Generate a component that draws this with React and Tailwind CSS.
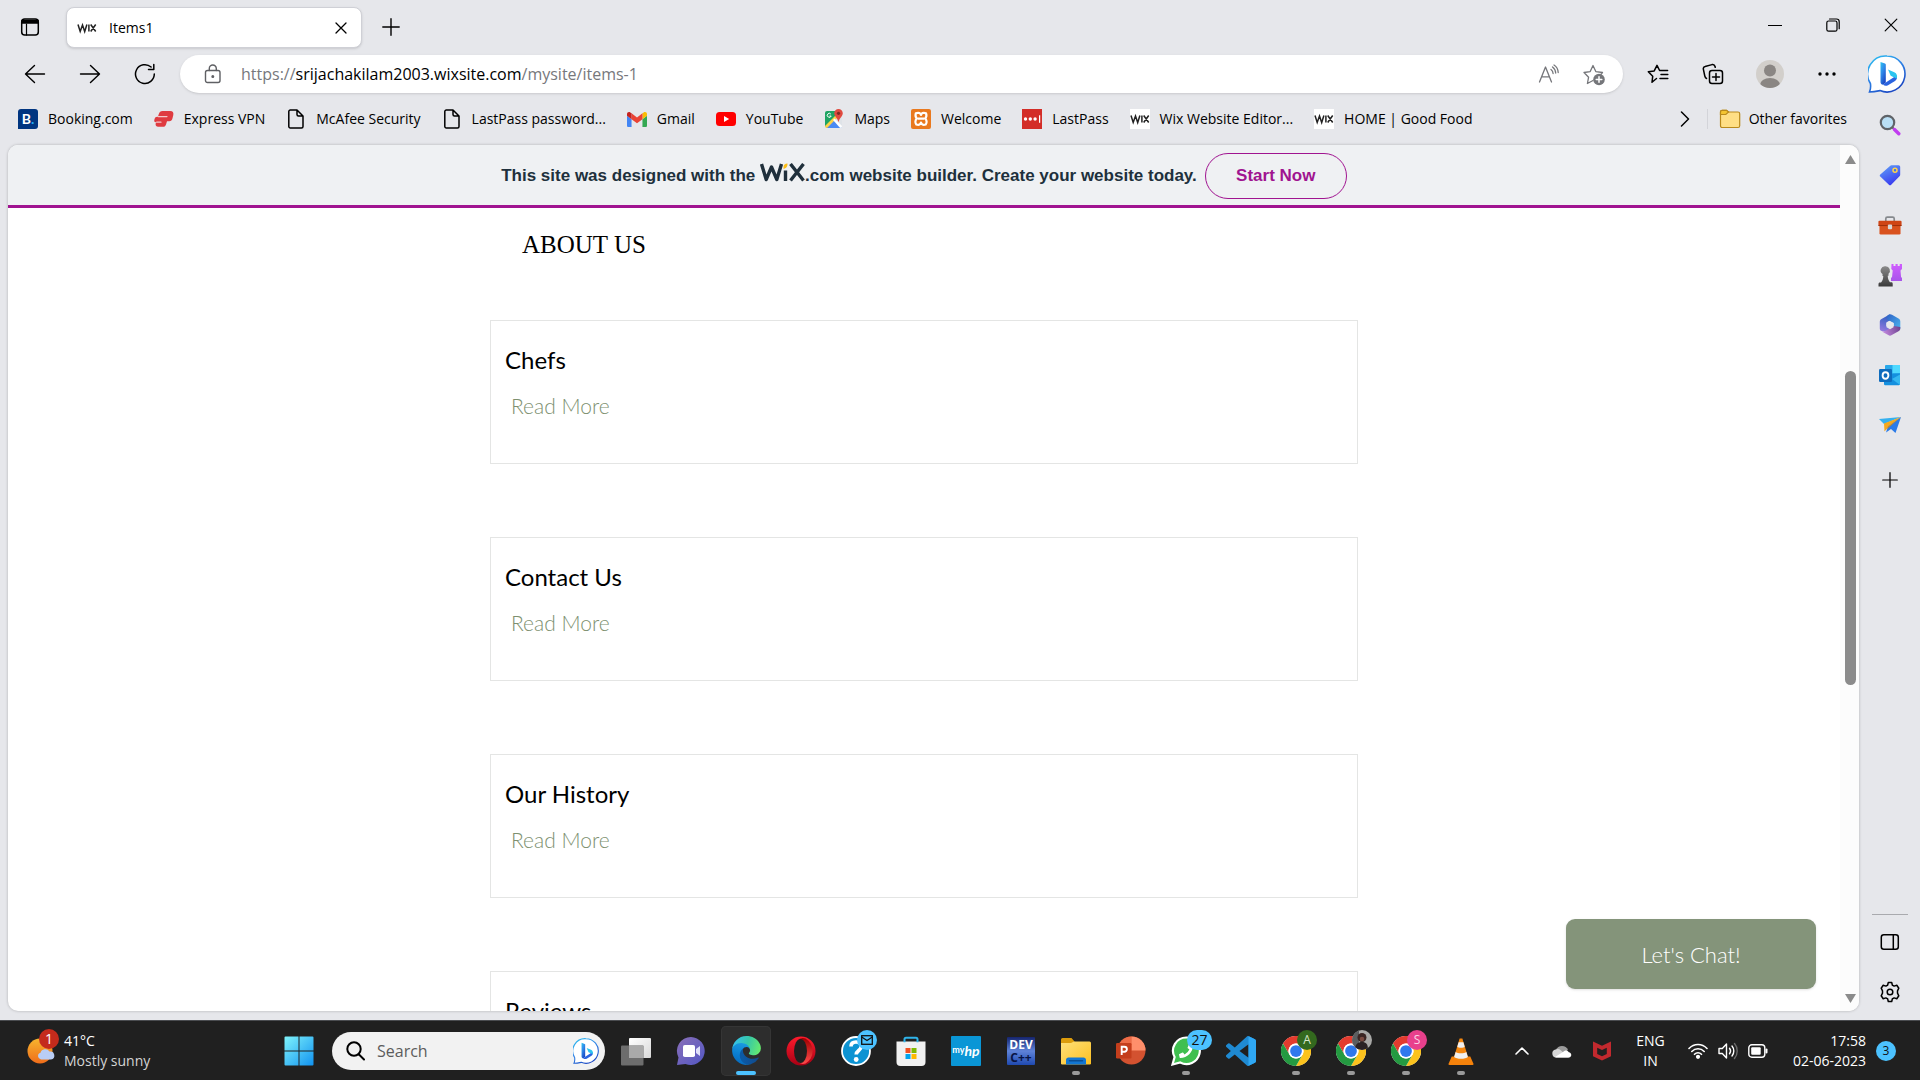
import React from "react";
import { FaPhoneAlt } from "react-icons/fa";

const stroke = { fill: "none", stroke: "currentColor", strokeLinecap: "round", strokeLinejoin: "round" };

/* ---------- browser icons ---------- */

const TabActionsIcon = () => (
  <svg width="20" height="20" viewBox="0 0 20 20" {...stroke} strokeWidth="1.5">
    <rect x="1.7" y="2" width="16.6" height="16" rx="3" />
    <path d="M2 3.5h16V6H2z" fill="currentColor" />
    <path d="M6.5 7v11" strokeWidth="1.2" />
  </svg>
);
const CloseIcon = ({ size = 12, width = 1.3 }) => (
  <svg width={size} height={size} viewBox="0 0 12 12" {...stroke} strokeWidth={width}>
    <path d="M1 1l10 10M11 1L1 11" />
  </svg>
);
const PlusIcon = ({ size = 18 }) => (
  <svg width={size} height={size} viewBox="0 0 18 18" {...stroke} strokeWidth="1.4">
    <path d="M9 .8v16.4M.8 9h16.4" />
  </svg>
);
const ArrowIcon = ({ right }) => (
  <svg width="22" height="20" viewBox="0 0 22 20" {...stroke} strokeWidth="1.4">
    {right ? <path d="M1.500 10h19M11.500 1.500l9 8.500-9 8.500" /> : <path d="M20.500 10h-19M10.500 1.500l-9 8.500 9 8.500" />}
  </svg>
);
const RefreshIcon = () => (
  <svg width="22" height="22" viewBox="0 0 22 22" {...stroke} strokeWidth="1.5">
    <path d="M20.300 11a9.400 9.400 0 1 1-3.200-7" />
    <path d="M19.800 1.500v5h-5.300" />
  </svg>
);
const LockIcon = () => (
  <svg width="18" height="20" viewBox="0 0 18 20" {...stroke} strokeWidth="1.400" className="text-[#5f6064]">
    <rect x="1.500" y="6.500" width="14.500" height="12" rx="2" />
    <path d="M5.300 6.500V4.500a3.500 3.500 0 0 1 7 0v2" />
    <circle cx="8.800" cy="12.500" r=".8" fill="currentColor" />
  </svg>
);
const ReadAloudIcon = () => (
  <svg width="22" height="20" viewBox="0 0 22 20" {...stroke} strokeWidth="1.300" className="text-[#75767a]">
    <path d="M1.500 18L7.500 3l6 15M3.600 12.800h7.800" />
    <path d="M13 5.500c1.300 1 2 2.300 2.100 4M14.500 3c1.900 1.400 3 3.300 3.200 6M16 1c2.500 1.500 4 4 4.200 7.500" />
  </svg>
);
const StarAddIcon = () => (
  <svg width="24" height="24" viewBox="0 0 24 24" {...stroke} strokeWidth="1.300" className="text-[#75767a]">
    <path d="M11 18.500l-5.600 3 1.200-6.300L2 10.500l6.200-.9L11 3.500l2.800 6.100 6.700.9M20.500 10.500l-1.500 1.700" />
    <circle cx="17" cy="17.500" r="5.800" fill="currentColor" stroke="none" />
    <path d="M17 14.700v5.600M14.200 17.500h5.600" stroke="#fff" strokeWidth="1.500" />
  </svg>
);
const FavoritesIcon = () => (
  <svg width="22" height="20" viewBox="0 0 22 20" {...stroke} strokeWidth="1.500">
    <path d="M9.500 14.500L5 18.300l.7-6L1.300 7.800l5.900-.9L10 1.300l2.600 5.200h8M14 10.500h6.800M13 14.500h7.800" />
  </svg>
);
const CollectionsIcon = () => (
  <svg width="22" height="22" viewBox="0 0 22 22" {...stroke} strokeWidth="1.500">
    <rect x="7.500" y="7.500" width="13" height="13" rx="2.500" />
    <path d="M14 10.500v7M10.500 14h7M4.500 15.500C3.500 15 3 14 2.800 13L1.400 6.300c-.3-1.300.4-2.500 1.700-2.800L10 1.600c1.300-.3 2.600.4 2.900 1.700l.3 1" />
  </svg>
);
const ProfileIcon = () => (
  <svg width="28" height="28" viewBox="0 0 28 28">
    <clipPath id="avatar"><circle cx="14" cy="14" r="14" /></clipPath>
    <g clipPath="url(#avatar)">
      <rect width="28" height="28" fill="#d2cfcb" />
      <circle cx="14" cy="10.500" r="6" fill="#8a8683" />
      <ellipse cx="14" cy="25" rx="10" ry="7" fill="#8a8683" />
    </g>
  </svg>
);
const BingIcon = ({ size, id }) => (
  <svg width={size} height={size} viewBox="0 0 38 38">
    <defs>
      <linearGradient id={id} x1="0" y1="0" x2=".6" y2="1">
        <stop offset="0" stopColor="#2cc4f0" /><stop offset=".5" stopColor="#2f87e8" /><stop offset="1" stopColor="#1b49c4" />
      </linearGradient>
    </defs>
    <path d="M19 1a18 18 0 1 1-7 34.600c-3 .6-6.500 1.300-10.500 1.400 1.200-3 1.300-6 .9-8.500A18 18 0 0 1 19 1z" fill="#fff" stroke={`url(#${id})`} strokeWidth="1.600" />
    <path d="M12.500 7l4.500 1.600c.5.200.8.600.8 1.100v17.800l-2.600 2.300c-1.700 0-2.700-1.200-2.700-2.700z" fill={`url(#${id})`} />
    <path d="M15.200 29.800c1 1.100 3 1.400 4.800.4l7-4.200c2-1.300 2.500-3.600 1.500-5.500L17.800 27.500z" fill="#2a63e0" />
    <path d="M20 14.500l6.300 2.700a4.600 4.600 0 0 1 2.200 6.500c-.8-1-2-1.500-3.300-1.800l-2.500-1.100z" fill="#2cc4f0" />
  </svg>
);

/* ---------- favourites bar icons ---------- */

const BookingIcon = () => (
  <span className="flex size-5 items-center justify-center rounded-[3px] rounded-bl-none bg-[#003580] font-[Lato,sans-serif] text-[14px] font-bold leading-5 text-white">
    B<span className="text-[#1fa8f0]">.</span>
  </span>
);
const ExpressIcon = () => (
  <svg width="20" height="18" viewBox="0 0 20 18">
    <path d="M8.500 1h7.800c2.400 0 3.500 1.700 3 3.900l-.8 3.300c-.4 2-1.500 3-3.300 3H13l-.9 3c-.4 1.600-1.500 2.600-3.200 2.600H4.200c-2 0-3-1.300-2.500-3.200l.3-1.300c-1.400 0-2-1-1.700-2.300l.3-1c.3-1.400 1.300-2.200 2.700-2.200h.6L4.800 4C5.400 2 6.600 1 8.500 1z" fill="#df3b40" />
    <path d="M4.200 6.600H13M7 12.200H2.600" stroke="#f3c9cc" strokeWidth="1.200" strokeLinecap="round" />
  </svg>
);
const PageIcon = () => (
  <svg width="20" height="20" viewBox="0 0 20 20" {...stroke} strokeWidth="1.500">
    <path d="M4.300 1h6.700l6 6v10.500c0 .8-.7 1.500-1.500 1.500H4.300c-.8 0-1.500-.7-1.500-1.500v-15C2.800 1.700 3.500 1 4.300 1zM11 1v4.500c0 .8.700 1.500 1.500 1.500H17" />
  </svg>
);
const GmailIcon = () => (
  <svg width="20" height="15" viewBox="52 42 88 66">
    <path fill="#4285f4" d="M58 108h14V74L52 59v43c0 3.320 2.690 6 6 6" />
    <path fill="#34a853" d="M120 108h14c3.320 0 6-2.690 6-6V59l-20 15" />
    <path fill="#fbbc04" d="M120 48v26l20-15v-8c0-7.420-8.470-11.650-14.400-7.200" />
    <path fill="#ea4335" d="M72 74V48l24 18 24-18v26L96 92" />
    <path fill="#c5221f" d="M52 51v8l20 15V48l-5.600-4.200c-5.940-4.450-14.400-.22-14.400 7.200" />
  </svg>
);
const YouTubeIcon = () => (
  <svg width="20" height="14" viewBox="0 0 20 14">
    <rect width="20" height="14" rx="3.500" fill="#f00" />
    <path d="M8 4l5.200 3L8 10z" fill="#fff" />
  </svg>
);
const MapsIcon = () => (
  <svg width="20" height="20" viewBox="0 0 20 20">
    <clipPath id="map"><rect x="1" y="2" width="17" height="17" rx="2" /></clipPath>
    <g clipPath="url(#map)">
      <rect x="1" y="2" width="17" height="17" fill="#dfe3e8" />
      <path d="M1 2h16L1 18z" fill="#1fa463" />
      <path d="M9.500 10.500L18 19H1.500z" fill="#4a8af4" />
      <path d="M0 18L17 1l2 2L2 20z" fill="#fdd247" />
      <path d="M9 11l1.500-1.500L19 18v2h-2z" fill="#fff" />
    </g>
    <path d="M14.500 0a4.300 4.300 0 0 1 4.300 4.300c0 3-3.300 4.400-4.300 9-1-4.600-4.300-6-4.300-9A4.300 4.300 0 0 1 14.500 0z" fill="#e04a3f" />
    <circle cx="14.500" cy="4.300" r="1.600" fill="#7f2a24" />
    <path d="M6.800 5a2 2 0 1 0 .4 2H5.500" fill="none" stroke="#fff" />
  </svg>
);
const XamppIcon = () => (
  <svg width="20" height="20" viewBox="0 0 20 20">
    <rect width="20" height="20" rx="2" fill="#e9791f" />
    <path d="M4.800 4.200C8 3.200 9.500 4.200 10 6c.5-1.800 2-2.800 5-1.800.8 2.200.5 4-1 5.300 1.800 1.200 2.200 4.300.7 6C12 16.300 10.500 15.500 10 13.500c-.5 2-2 2.800-4.700 2-1.500-1.700-1.100-4.800.7-6-1.500-1.300-1.800-3.100-1.200-5.300zM7 9.700h6" fill="none" stroke="#fff" strokeWidth="2.200" strokeLinejoin="round" />
  </svg>
);
const LastPassIcon = () => (
  <svg width="20" height="20" viewBox="0 0 20 20">
    <rect width="20" height="20" fill="#d32d27" />
    <g fill="#fff"><circle cx="3.500" cy="10" r="1.700" /><circle cx="8.300" cy="10" r="1.700" /><circle cx="13.100" cy="10" r="1.700" /><rect x="17" y="6.300" width="1.200" height="7.500" /></g>
  </svg>
);
const WixBadge = ({ plain }) => (
  <svg width="20" height="20" viewBox="0 0 20 20">
    {!plain && <rect width="20" height="20" fill="#fff" />}
    <path d="M1 6.500l2.200 7L5.500 7l2.200 6.500 2.200-7M11.900 6.500v7M13.700 6.500l5 7M18.700 6.500l-5 7" fill="none" stroke="#222" strokeWidth="1.500" />
  </svg>
);
const FolderIcon = () => (
  <svg width="22" height="20" viewBox="0 0 22 20">
    <path d="M1.500 4V3c0-1 .8-1.700 1.700-1.700h4.300L9.500 3H19c1 0 1.700.8 1.700 1.700v12c0 1-.8 1.800-1.700 1.800H3.200c-1 0-1.700-.8-1.700-1.800z" fill="#ffdf85" stroke="#b98a1c" strokeWidth="1.200" />
    <path d="M1.500 5.500h5.300L9.500 3 7.500 1.300H3.200c-1 0-1.700.7-1.700 1.700z" fill="#f4c531" stroke="#b98a1c" strokeWidth="1.200" />
  </svg>
);

const BOOKMARKS = [
  ["Booking.com", <BookingIcon />],
  ["Express VPN", <ExpressIcon />],
  ["McAfee Security", <PageIcon />],
  ["LastPass password...", <PageIcon />],
  ["Gmail", <GmailIcon />],
  ["YouTube", <YouTubeIcon />],
  ["Maps", <MapsIcon />],
  ["Welcome", <XamppIcon />],
  ["LastPass", <LastPassIcon />],
  ["Wix Website Editor...", <WixBadge />],
  ["HOME | Good Food", <WixBadge />],
];

/* ---------- sidebar icons ---------- */

const SideSearch = () => (
  <svg width="22" height="22" viewBox="0 0 22 22">
    <path d="M13.500 13.500L16 16" stroke="#666" strokeWidth="2" />
    <path d="M15.500 15.500l4.300 4.300" stroke="#c13df0" strokeWidth="3.400" strokeLinecap="round" />
    <circle cx="8.500" cy="8.500" r="6.700" fill="#b9dff5" stroke="#5f6368" strokeWidth="2.200" />
  </svg>
);
const SideTag = () => (
  <svg width="22" height="22" viewBox="0 0 22 22">
    <defs><linearGradient id="tag" x1="0" y1="0" x2=".5" y2="1"><stop stopColor="#62a4f7" /><stop offset="1" stopColor="#3a3df0" /></linearGradient></defs>
    <path d="M12.500 1.300h7c1 0 1.700.7 1.700 1.700v7.500c0 .7-.2 1.200-.7 1.700l-8.300 8.600c-.7.700-1.600.7-2.300 0L1.300 12.600c-.7-.7-.7-1.500 0-2.200L11 2c.4-.5.900-.7 1.500-.7z" fill="url(#tag)" />
    <circle cx="16" cy="6.300" r="2" fill="#3b6ef0" stroke="#ffd34a" strokeWidth="1.500" />
  </svg>
);
const SideTools = () => (
  <svg width="24" height="20" viewBox="0 0 22 19">
    <path d="M7 6V3.500C7 2.500 7.700 2 8.500 2h5c.8 0 1.500.5 1.500 1.500V6" fill="none" stroke="#85898d" strokeWidth="1.600" />
    <rect x="1" y="9" width="20" height="9.500" rx="1.200" fill="#d9521e" />
    <rect x="0" y="5.500" width="22" height="5" rx="1" fill="#cf4515" />
    <path d="M0 10h22" stroke="#a13009" />
    <rect x="9" y="9" width="4" height="4.500" rx="1" fill="#d8d8d8" />
  </svg>
);
const SideGames = () => (
  <svg width="24" height="24" viewBox="0 0 24 24">
    <defs>
      <linearGradient id="rook" x1="0" y1="0" x2="0" y2="1"><stop stopColor="#d05cff" /><stop offset="1" stopColor="#a855ea" /></linearGradient>
      <linearGradient id="pawn" x1="0" y1="0" x2="0" y2="1"><stop stopColor="#8b8b8b" /><stop offset="1" stopColor="#3a3a3a" /></linearGradient>
    </defs>
    <path d="M13.500 1h2v2h2V1h2.200v2h2V1H24v5l-1.500 1.500.6 7H24V18H13v-3.500h1l.7-7L13.300 6z" fill="url(#rook)" />
    <path d="M7.500 3.200a4.300 4.300 0 0 1 3 7.500v2H9.700c.2 3 .9 5 2.300 6.500h1.500c.8 0 1.200.6 1.200 1.500v2.800H.5V21c0-.9.500-1.500 1.200-1.500H3c1.500-1.500 2.200-3.500 2.300-6.500h-.8v-2a4.300 4.300 0 0 1 3-7.800z" fill="url(#pawn)" />
  </svg>
);
const SideM365 = () => (
  <svg width="22" height="22" viewBox="0 0 22 22">
    <defs>
      <linearGradient id="m1" x1=".5" y1="0" x2=".3" y2="1"><stop stopColor="#2b5fc0" /><stop offset="1" stopColor="#9a7be0" /></linearGradient>
      <linearGradient id="m2" x1="0" y1="0" x2="1" y2="1"><stop stopColor="#2f62c6" /><stop offset="1" stopColor="#4bb8f0" /></linearGradient>
      <linearGradient id="m3" x1="0" y1=".5" x2="1" y2=".3"><stop stopColor="#c58be0" /><stop offset="1" stopColor="#6f4391" /></linearGradient>
    </defs>
    <path d="M11 .2L2.500 4.900C1.300 5.600.8 6.500.8 7.800v6.800c0 1.600.8 2.300 2 2.500l5.200 1.200 3-4.300-3.700-2V8.500L11.500 6z" fill="url(#m1)" />
    <path d="M9.500.8c1.200-.7 2.300-.7 3.500 0l6.500 3.800c1.200.7 1.800 1.700 1.800 3V14c0 1-.3 1.700-.8 2.200l-5.700-3.700V9L8 5.500V3c0-1 .5-1.700 1.500-2.200z" fill="url(#m2)" />
    <path d="M21.300 13v1.200c0 1.400-.6 2.400-1.800 3.100l-6.700 3.800c-1.200.7-2.400.7-3.600 0l-6.400-3.700c2 .2 3.300-.3 4.800-1.200l7.200-4.200z" fill="url(#m3)" />
    <path d="M11 7.300l3.500 2v3.900L11 15.200l-3.500-2V9.300z" fill="#e6e7eb" />
  </svg>
);
const SideOutlook = () => (
  <svg width="22" height="22" viewBox="0 0 22 22">
    <rect x="6" y="1" width="15" height="15" rx="1" fill="#28a8ea" />
    <path d="M13.500 1H21v8h-7.500z" fill="#50d9ff" />
    <path d="M5 10.500l16-1V20c0 .7-.5 1.200-1.200 1.200H6c-.6 0-1-.5-1-1.200z" fill="#1490df" />
    <path d="M21 10.500L13 15l8 6z" fill="#35b8f1" />
    <rect x="0" y="5" width="13" height="13" rx="1.200" fill="#0f6cbd" />
    <ellipse cx="6.500" cy="11.500" rx="2.900" ry="3.200" fill="none" stroke="#fff" strokeWidth="1.900" />
  </svg>
);
const SidePlane = () => (
  <svg width="22" height="18" viewBox="0 0 22 18">
    <path d="M0 3l22-2L5 8z" fill="#35b0ee" />
    <path d="M5 7.500L22 1 8.500 11 5.500 15.500z" fill="#f5a81c" />
    <path d="M22 1l-5.500 16-4.500-4-5 3.500 2-6z" fill="#2b7be8" />
    <path d="M22 1L9 10.500 5.500 15z" fill="#d98a0e" />
  </svg>
);
const PanelIcon = () => (
  <svg width="20" height="18" viewBox="0 0 20 18" {...stroke} strokeWidth="1.500">
    <rect x="1.300" y="1.700" width="17" height="14.500" rx="2.500" /><path d="M13.300 2v14" />
  </svg>
);
const GearIcon = () => (
  <svg width="22" height="22" viewBox="0 0 22 22" {...stroke} strokeWidth="1.500">
    <circle cx="11" cy="11" r="2.800" />
    <path d="M9.300 1.500h3.400l.7 2.700c.6.200 1.200.5 1.700.9l2.700-.8 2 2.900-1.300 2.600v2.400l1.300 2.600-2 2.900-2.700-.8c-.5.400-1.100.7-1.700.9l-.7 2.700H9.300l-.7-2.700c-.6-.2-1.200-.5-1.700-.9l-2.700.8-2-2.900 1.300-2.600V9.800L2.200 7.200l2-2.900 2.700.8c.5-.4 1.100-.7 1.700-.9z" />
  </svg>
);

/* ---------- taskbar icons ---------- */

const StartIcon = () => (
  <svg width="30" height="30" viewBox="0 0 30 30">
    <defs><linearGradient id="start" x1="0" y1="0" x2="1" y2="1"><stop stopColor="#7ff3fb" /><stop offset="1" stopColor="#1192f0" /></linearGradient></defs>
    <path d="M1.500.5h13v14H.5v-13a1 1 0 0 1 1-1zM15.500.5h13a1 1 0 0 1 1 1v13h-14zM.5 15.500h14v14h-13a1 1 0 0 1-1-1zM15.500 15.500h14v13a1 1 0 0 1-1 1h-13z" fill="url(#start)" />
  </svg>
);
const WeatherIcon = () => (
  <svg width="28" height="28" viewBox="0 0 28 28">
    <defs><linearGradient id="sun" x1="0" y1="0" x2="0" y2="1"><stop stopColor="#f7b52e" /><stop offset="1" stopColor="#ef6c1a" /></linearGradient></defs>
    <circle cx="13" cy="14" r="12.500" fill="url(#sun)" />
    <path d="M14 22.500a3.500 3.500 0 0 1-.5-6.800 5 5 0 0 1 9-1.200 4 4 0 0 1 1.500 8z" fill="#b9cdf5" />
  </svg>
);
const TaskViewIcon = () => (
  <svg width="30" height="30" viewBox="0 0 30 30">
    <defs><linearGradient id="tv" x1="0" y1="0" x2="1" y2="1"><stop stopColor="#fff" /><stop offset="1" stopColor="#d8d8d8" /></linearGradient></defs>
    <rect x="8" y="2" width="22" height="20" rx="1" fill="url(#tv)" />
    <rect x="0" y="9.500" width="22.500" height="20" rx="1" fill="#6d6d6d" />
    <rect x="8" y="9.500" width="14.500" height="12.500" fill="#a9a9a9" />
  </svg>
);
const ChatIcon = () => (
  <svg width="30" height="30" viewBox="0 0 30 30">
    <defs><linearGradient id="chat" x1="0" y1="0" x2="1" y2="1"><stop stopColor="#8a6fb8" /><stop offset="1" stopColor="#5257c4" /></linearGradient></defs>
    <path d="M15 1a14 14 0 1 1-5.500 27L1 29l1.500-7.500A14 14 0 0 1 15 1z" fill="url(#chat)" />
    <rect x="7" y="9" width="12" height="12" rx="1.800" fill="#fff" />
    <path d="M20 13l4-3v10l-4-3z" fill="#dfe0fa" />
  </svg>
);
const EdgeIcon = () => (
  <svg width="31" height="31" viewBox="0 0 27600 27600">
    <defs>
      <linearGradient id="e1" x1=".2" y1=".5" x2="1" y2=".5"><stop stopColor="#0c59a4" /><stop offset="1" stopColor="#114a8b" /></linearGradient>
      <linearGradient id="e2" x1=".5" y1="0" x2=".3" y2="1"><stop stopColor="#1b9de2" /><stop offset=".6" stopColor="#0a7ccf" /><stop offset="1" stopColor="#0669bb" /></linearGradient>
      <linearGradient id="e3" x1="0" y1=".4" x2="1" y2=".6"><stop stopColor="#35c1f1" /><stop offset=".5" stopColor="#36c7a8" /><stop offset="1" stopColor="#66eb6e" /></linearGradient>
    </defs>
    <path fill="url(#e1)" d="M24105 20053a9345 9345 0 01-1053 472 10202 10202 0 01-3590 646c-4732 0-8855-3255-8855-7432 0-1175 680-2193 1643-2729-4280 180-5380 4640-5380 7253 0 7387 6810 8137 8276 8137 791 0 1984-230 2704-456l130-44a12834 12834 0 006660-5282c220-350-168-757-535-565z" />
    <path fill="url(#e2)" d="M11571 25141a7913 7913 0 01-2273-2137 8145 8145 0 01-1514-4740 8093 8093 0 013093-6395 8082 8082 0 011373-859c312-148 846-414 1554-404a3236 3236 0 012569 1297 3184 3184 0 01636 1866c0-21 2446-7960-8005-7960-4390 0-8004 4166-8004 7820 0 2319 538 4170 1212 5604a12833 12833 0 007684 6757 12795 12795 0 003908 610c1414 0 2774-233 4045-656a7575 7575 0 01-6278-803z" />
    <path fill="url(#e3)" d="M16231 15886c-80 105-330 250-330 566 0 260 170 512 472 723 1438 1003 4149 868 4156 868a5954 5954 0 003027-839 6147 6147 0 001133-850 6180 6180 0 001910-4437c26-2242-796-3732-1133-4392-2120-4141-6694-6525-11668-6525-7011 0-12703 5635-12798 12620 47-3654 3679-6605 7996-6605 350 0 2346 34 4200 1007 1634 858 2490 1894 3086 2921 618 1067 728 2415 728 2952s-271 1333-780 1990z" />
  </svg>
);
const OperaIcon = () => (
  <svg width="30" height="30" viewBox="0 0 30 30">
    <defs>
      <linearGradient id="o1" x1="0" y1="0" x2="0" y2="1"><stop stopColor="#ff1b2d" /><stop offset="1" stopColor="#a70014" /></linearGradient>
      <linearGradient id="o2" x1="0" y1="0" x2="0" y2="1"><stop stopColor="#9c0000" /><stop offset="1" stopColor="#ff4b4b" /></linearGradient>
    </defs>
    <circle cx="15" cy="15" r="14.500" fill="url(#o1)" />
    <path d="M11 5a8 8 0 0 1 8.500-2.500A14.500 14.500 0 0 1 19.500 27.500 8 8 0 0 1 11 25z" fill="url(#o2)" />
    <ellipse cx="14.500" cy="15" rx="6.500" ry="12" fill="#202020" />
  </svg>
);
const HelpIcon = () => (
  <svg width="30" height="30" viewBox="0 0 30 30">
    <circle cx="15" cy="15" r="14" fill="#0c93d3" stroke="#fff" strokeWidth="1.800" />
    <path d="M10 10.500c0-3 2-4.500 5-4.500s5.200 1.700 5.200 4.500c0 4-5 4-5 8" fill="none" stroke="#fff" strokeWidth="3.600" />
    <circle cx="15.200" cy="23.500" r="2.400" fill="#fff" />
  </svg>
);
const StoreIcon = () => (
  <svg width="30" height="30" viewBox="0 0 30 30">
    <path d="M.5 5.500h29V26a4 4 0 0 1-4 4h-21a4 4 0 0 1-4-4z" fill="#f1f1f1" />
    <path d="M8.500 6.200v-3c0-.9.600-1.500 1.500-1.500h10c.9 0 1.500.6 1.500 1.500v3" fill="none" stroke="#2fb4ea" strokeWidth="2" />
    <path d="M9.500 12h5v5h-5z" fill="#f25022" /><path d="M15.500 12h5v5h-5z" fill="#7fba00" />
    <path d="M9.500 18h5v5h-5z" fill="#00a4ef" /><path d="M15.500 18h5v5h-5z" fill="#ffb900" />
  </svg>
);
const MyHpIcon = () => (
  <span className="flex size-[30px] items-center justify-center rounded-[1px] bg-[#0a96d6] font-[Lato,sans-serif] text-[9px] font-bold text-white">
    my<i className="text-[14px] leading-none">hp</i>
  </span>
);
const DevIcon = () => (
  <span className="flex size-7 flex-col items-center justify-center overflow-hidden rounded-[1px] bg-linear-to-b from-[#16246e] via-[#5f83d8] to-[#1f49b0] font-['Open_Sans',sans-serif] text-[12px] font-bold leading-[13px]">
    <span className="text-white">DEV</span>
    <span className="text-[#081444]">C++</span>
  </span>
);
const ExplorerIcon = () => (
  <svg width="30" height="28" viewBox="0 0 30 28">
    <defs><linearGradient id="fx" x1="0" y1="0" x2="1" y2="1"><stop stopColor="#ffe07a" /><stop offset="1" stopColor="#fcc021" /></linearGradient></defs>
    <path d="M0 2.500A1.500 1.500 0 0 1 1.500 1h9l3 3.500V9H0z" fill="#dc9c0c" />
    <path d="M0 6h10l3-1.500h15.500A1.500 1.500 0 0 1 30 6v20a1.300 1.300 0 0 1-1.500 1.500h-27A1.300 1.300 0 0 1 0 26z" fill="url(#fx)" />
    <path d="M5 27.500V23c0-1.500 1-2.500 2.500-2.500h15c1.500 0 2.500 1 2.500 2.500v4.500z" fill="#1277d3" />
    <path d="M8.500 23.800h13" stroke="#0a4f96" strokeWidth="1.500" strokeLinecap="round" />
  </svg>
);
const PowerPointIcon = () => (
  <svg width="30" height="30" viewBox="0 0 30 30">
    <circle cx="15.500" cy="14.500" r="14" fill="#d35230" />
    <path d="M15.500.5v14h-14a14 14 0 0 1 14-14z" fill="#ed6c47" />
    <path d="M15.500.5a14 14 0 0 1 14 14h-14z" fill="#ff8f6b" />
    <rect x="0" y="7" width="15.500" height="15.500" rx="1.300" fill="#c43e1c" />
    <path d="M5.700 19v-8.300h2.700a2.400 2.400 0 0 1 0 5H5.700" fill="none" stroke="#fff" strokeWidth="1.900" />
  </svg>
);
const WhatsAppIcon = () => (
  <span className="relative flex size-[30px] items-center justify-center">
    <svg width="30" height="30" viewBox="0 0 30 30" className="absolute inset-0">
      <path d="M15.500 1.500a13.300 13.300 0 1 1-6.300 25L1.500 28.500l2.100-7.400A13.300 13.300 0 0 1 15.500 1.500z" fill="#3fbf4f" stroke="#fff" strokeWidth="2.200" />
    </svg>
    <FaPhoneAlt className="relative size-[14px] -scale-x-100 text-white" />
  </span>
);
const VsCodeIcon = () => (
  <svg width="30" height="30" viewBox="0 0 24 24">
    <path fill="#1f8ad2" d="M23.150 2.587L18.210.21a1.494 1.494 0 0 0-1.705.29l-9.460 8.630-4.120-3.128a.999.999 0 0 0-1.276.057L.327 7.261A1 1 0 0 0 .326 8.740L3.899 12 .326 15.260a1 1 0 0 0 .001 1.479L1.650 17.940a.999.999 0 0 0 1.276.057l4.120-3.128 9.460 8.630a1.492 1.492 0 0 0 1.704.29l4.942-2.377A1.500 1.500 0 0 0 24 20.060V3.939a1.500 1.500 0 0 0-.85-1.352zm-5.146 14.861L10.826 12l7.178-5.448v10.896z" />
    <path fill="#2fa8f4" d="M18.210.21l4.940 2.377A1.500 1.500 0 0 1 24 3.939V20.060a1.500 1.500 0 0 1-.848 1.352l-4.942 2.377c-.2.080-.2 0-.206-.300V.5c0-.3.100-.3.206-.29z" />
  </svg>
);
const ChromeIcon = () => (
  <svg width="30" height="30" viewBox="0 0 48 48">
    <circle cx="24" cy="24" r="24" fill="#fff" />
    <path d="M3.200 12A24 24 0 0 1 44.800 12H24a12 12 0 0 0-10.400 18z" fill="#e33b2e" />
    <path d="M44.800 12A24 24 0 0 1 24 48l10.400-18A12 12 0 0 0 24 12z" fill="#fcc31e" />
    <path d="M24 48A24 24 0 0 1 3.200 12l10.400 18a12 12 0 0 0 20.800 0z" fill="#249a41" />
    <circle cx="24" cy="24" r="12" fill="#fff" /><circle cx="24" cy="24" r="9.400" fill="#2f78ec" />
  </svg>
);
const VlcIcon = () => (
  <svg width="26" height="28" viewBox="0 0 28 30">
    <path d="M4 21h20l3.500 8c0 .6-.4 1-1 1h-25c-.6 0-1-.4-1-1z" fill="#f5820b" />
    <path d="M12.500 1.500h3L22 23c-2 3-14 3-16 0z" fill="#f5870f" />
    <path d="M11.400 5.500h5.200L18 10.500c-1.500 1.500-6.500 1.500-8 0zM8.200 16c2 2 9.600 2 11.600 0l1.600 5.500c-2.500 2.500-12.300 2.500-14.800 0z" fill="#f0f0f0" />
  </svg>
);
const PhotoAvatar = () => (
  <svg width="20" height="20" viewBox="0 0 20 20">
    <clipPath id="photo"><circle cx="10" cy="10" r="10" /></clipPath>
    <g clipPath="url(#photo)">
      <rect width="20" height="20" fill="#a9a9a7" />
      <rect width="7" height="20" fill="#5b5e60" />
      <circle cx="10" cy="7.500" r="4.500" fill="#3a2523" />
      <path d="M3 20c0-6 3-8 7-8s6 2 6 8z" fill="#2a2224" />
      <circle cx="10" cy="9" r="2.300" fill="#7a4a40" />
    </g>
  </svg>
);

const Badge = ({ className, children }) => (
  <span className={`absolute -top-1.5 left-4 flex h-5 items-center justify-center rounded-full ${className}`}>{children}</span>
);

const APPS = [
  { name: "Task view", icon: <TaskViewIcon /> },
  { name: "Chat", icon: <ChatIcon /> },
  { name: "Microsoft Edge", icon: <EdgeIcon />, state: "active" },
  { name: "Opera", icon: <OperaIcon /> },
  {
    name: "Get Help",
    icon: <HelpIcon />,
    badge: (
      <Badge className="w-5 bg-[#4cc2ff]">
        <svg width="12" height="10" viewBox="0 0 12 10" fill="none" stroke="#111" strokeWidth="1.300"><rect x=".7" y=".7" width="10.600" height="8.600" /><path d="M.7 2l5.300 3.500L11.300 2" /></svg>
      </Badge>
    ),
  },
  { name: "Microsoft Store", icon: <StoreIcon /> },
  { name: "myHP", icon: <MyHpIcon /> },
  { name: "Dev-C++", icon: <DevIcon /> },
  { name: "File Explorer", icon: <ExplorerIcon />, state: "open" },
  { name: "PowerPoint", icon: <PowerPointIcon /> },
  { name: "WhatsApp", icon: <WhatsAppIcon />, state: "open", badge: <Badge className="w-[25px] bg-[#4cc2ff] text-sm text-[#111]">27</Badge> },
  { name: "Visual Studio Code", icon: <VsCodeIcon /> },
  { name: "Chrome, profile A", icon: <ChromeIcon />, state: "open", badge: <Badge className="w-5 bg-[#33691e] text-xs text-[#d8e8cc]">A</Badge> },
  { name: "Chrome, photo profile", icon: <ChromeIcon />, state: "open", badge: <Badge className="w-5"><PhotoAvatar /></Badge> },
  { name: "Chrome, profile S", icon: <ChromeIcon />, state: "open", badge: <Badge className="w-5 bg-[#e8408c] text-xs text-[#fbd5e6]">S</Badge> },
  { name: "VLC", icon: <VlcIcon />, state: "open" },
];

/* ---------- sections ---------- */

const TabStrip = () => (
  <header className="flex h-[52px] shrink-0 items-start">
    <button aria-label="Tab actions" className="ml-5 mt-[17px]"><TabActionsIcon /></button>
    <div className="ml-[26px] mt-[7px] flex h-[41px] w-[296px] items-center rounded-lg border border-[#cfd0d6] bg-white pl-2.5 pr-3.5 shadow-sm">
      <WixBadge plain />
      <span className="ml-3 flex-1 text-sm">Items1</span>
      <button aria-label="Close tab"><CloseIcon /></button>
    </div>
    <button aria-label="New tab" className="ml-5 mt-[18px]"><PlusIcon /></button>
    <div className="ml-auto mr-[22px] mt-[18px] flex items-center gap-[44px]">
      <button aria-label="Minimize" className="h-3.5 w-3.5"><span className="block h-px w-full bg-black" /></button>
      <button aria-label="Restore">
        <svg width="14" height="14" viewBox="0 0 14 14" {...stroke} strokeWidth="1.200"><rect x=".8" y="3" width="10.200" height="10.200" rx="1.800" /><path d="M3.500 1h7A2.700 2.700 0 0 1 13.200 3.700v7" /></svg>
      </button>
      <button aria-label="Close window"><CloseIcon size={14} width={1} /></button>
    </div>
  </header>
);

const Toolbar = () => (
  <div className="flex h-11 shrink-0 items-center">
    <div className="flex w-[180px] items-center gap-[33px] pl-6">
      <button aria-label="Back"><ArrowIcon /></button>
      <button aria-label="Forward"><ArrowIcon right /></button>
      <button aria-label="Refresh"><RefreshIcon /></button>
    </div>
    <div className="flex h-[38px] flex-1 items-center rounded-full bg-white pl-6 pr-[17px] shadow-sm">
      <LockIcon />
      <a href="#address" className="ml-[19px] flex-1 text-[16px] text-[#77787c]">
        https://<span className="text-black">srijachakilam2003.wixsite.com</span>/mysite/items-1
      </a>
      <button aria-label="Read aloud"><ReadAloudIcon /></button>
      <button aria-label="Add to favorites" className="ml-[22px]"><StarAddIcon /></button>
    </div>
    <div className="flex items-center pl-6 pr-[23px]">
      <button aria-label="Favorites"><FavoritesIcon /></button>
      <button aria-label="Collections" className="ml-[33px]"><CollectionsIcon /></button>
      <button aria-label="Profile" className="ml-8"><ProfileIcon /></button>
      <button aria-label="Settings and more" className="ml-[34px]">
        <svg width="18" height="4" viewBox="0 0 18 4"><circle cx="2" cy="2" r="1.700" /><circle cx="9" cy="2" r="1.700" /><circle cx="16" cy="2" r="1.700" /></svg>
      </button>
    </div>
  </div>
);

const FavoritesBar = () => (
  <nav className="mb-[3px] flex h-[46px] shrink-0 items-center pl-[18px] pr-3">
    <div className="flex flex-1 items-center gap-[21px]">
      {BOOKMARKS.map(([label, icon]) => (
        <a key={label} href="#bookmark" className="flex items-center gap-2.5 whitespace-nowrap text-sm">
          <span className="flex size-5 items-center justify-center">{icon}</span>
          {label}
        </a>
      ))}
    </div>
    <button aria-label="More favorites" className="mr-[17px]">
      <svg width="10" height="16" viewBox="0 0 10 16" {...stroke} strokeWidth="1.500"><path d="M1.500 1l7 7-7 7" /></svg>
    </button>
    <span className="h-5 w-px bg-[#d3d4d9]" />
    <a href="#other" className="ml-[11px] flex items-center gap-2 text-sm"><FolderIcon />Other favorites</a>
  </nav>
);

const WixLogo = () => (
  <svg width="45" height="19" viewBox="0 0 45 19" className="mb-1.5" role="img" aria-label="WiX">
    <path d="M1.500 1l4.700 15.500L11.500 4l5.300 12.500L21.500 1" fill="none" stroke="#20303c" strokeWidth="3.400" strokeLinejoin="round" />
    <path d="M25.500 7.500V18M30.500 1l13 16.500M43.500 1l-13 16.500" fill="none" stroke="#20303c" strokeWidth="3.400" />
    <path d="M23.500 4c0-2 1.500-3.500 4-3.500 0 2.500-.5 4.500-4 5.500z" fill="#fbbd16" />
  </svg>
);

const WixBanner = () => (
  <div className="flex h-[63px] shrink-0 items-center justify-center gap-2 border-b-[3px] border-[#a01490] bg-[#eff1f3] pt-px font-['Liberation_Sans',Arial,sans-serif] text-[17px] font-bold text-[#20303c]">
    <p className="flex items-center whitespace-nowrap">
      This site was designed with the&nbsp;<WixLogo />.com website builder. Create your website today.
    </p>
    <a href="#start" className="flex h-[46px] w-[142px] items-center justify-center rounded-full border border-[#a01490] text-[17px] text-[#a01490]">Start Now</a>
  </div>
);

const ITEMS = ["Chefs", "Contact Us", "Our History", "Reviews"];

const SitePage = () => (
  <main className="relative flex min-w-0 flex-1 flex-col">
    <WixBanner />
    <div className="min-h-0 flex-1 overflow-hidden">
      <div className="mx-auto w-full max-w-[868px]">
        <h1 className="h-[112px] pl-8 pt-[21px] font-['Liberation_Serif',serif] text-[25px] leading-8">ABOUT US</h1>
        {ITEMS.map((title) => (
          <section key={title} className="mb-[73px] h-36 border border-[#e4e5e4] px-3.5 pt-[23px] font-[Lato,sans-serif]">
            <h2 className="text-[24px] leading-8">{title}</h2>
            <a href="#item" className="ml-1.5 mt-[18px] inline-block text-[21px] font-light leading-6 text-[#7d9070]">Read More</a>
          </section>
        ))}
      </div>
    </div>
    <button className="absolute bottom-[22px] right-6 h-[70px] w-[250px] rounded-[9px] bg-[#84947a] font-[Lato,sans-serif] text-[22px] font-light text-white shadow-sm">
      Let's Chat!
    </button>
  </main>
);

const Scrollbar = () => (
  <div className="flex w-[19px] shrink-0 flex-col items-center bg-[#fcfcfc] pb-2 pl-px pt-2.5" aria-hidden="true">
    <svg width="11" height="9" viewBox="0 0 11 9"><path d="M5.500 0L11 9H0z" fill="#8b8b8b" /></svg>
    <span className="mb-auto mt-[207px] h-[314px] w-[11px] rounded-full bg-[#8b8b8b]" />
    <svg width="11" height="9" viewBox="0 0 11 9"><path d="M5.500 9L11 0H0z" fill="#8b8b8b" /></svg>
  </div>
);

const Sidebar = () => (
  <aside className="flex w-[61px] shrink-0 flex-col items-center">
    <button aria-label="Bing" className="mt-[3px] mr-1.5"><BingIcon size={38} id="bingSide" /></button>
    <div className="mt-[7px] flex flex-col">
      {[
        ["Search", <SideSearch />], ["Shopping", <SideTag />], ["Tools", <SideTools />], ["Games", <SideGames />],
        ["Microsoft 365", <SideM365 />], ["Outlook", <SideOutlook />], ["Drop", <SidePlane />],
      ].map(([label, icon]) => (
        <button key={label} aria-label={label} className="flex h-[50px] items-center justify-center">{icon}</button>
      ))}
    </div>
    <button aria-label="Customize sidebar" className="mt-[22px]"><PlusIcon size={16} /></button>
    <div className="mt-auto mb-[17px] flex flex-col items-center border-t border-[#a9aaae] px-[7px] pt-[18px]">
      <button aria-label="Toggle sidebar"><PanelIcon /></button>
      <button aria-label="Settings" className="mt-[30px]"><GearIcon /></button>
    </div>
  </aside>
);

const Taskbar = () => (
  <footer className="flex h-[60px] shrink-0 items-center border-t border-[#4a4c50] bg-[#202020] text-sm text-white">
    <button className="relative flex w-[256px] items-center pl-[27px] text-left">
      <span className="relative mr-[9px]">
        <WeatherIcon />
        <span className="absolute -top-2 left-3 flex size-5 items-center justify-center rounded-full bg-[#c42b1c]">1</span>
      </span>
      <span className="leading-5">41°C<br /><span className="text-[#d4d4d4]">Mostly sunny</span></span>
    </button>
    <button aria-label="Start" className="ml-7"><StartIcon /></button>
    <label className="ml-[18px] flex h-[38px] w-[273px] items-center rounded-full bg-[#f2f2f2] pl-3.5 pr-1.5 text-black">
      <svg width="19" height="20" viewBox="0 0 19 20" {...stroke} strokeWidth="2"><circle cx="8" cy="8" r="6.700" /><path d="M13 13.500l5 5" /></svg>
      <input aria-label="Search" placeholder="Search" className="ml-3 h-8 min-w-0 flex-1 bg-transparent text-[16px] outline-none placeholder:text-[#5c5c5c]" />
      <BingIcon size={26} id="bingTask" />
    </label>
    <div className="ml-[6px] flex gap-[5px]">
      {APPS.map(({ name, icon, badge, state }) => (
        <button
          key={name}
          aria-label={name}
          className={`relative flex h-[50px] w-[50px] items-center justify-center rounded-[5px] ${state === "active" ? "bg-[#2d2d2d] ring-1 ring-inset ring-[#353535]" : ""}`}
        >
          <span className="relative flex items-center justify-center">{icon}{badge}</span>
          {state === "active" && <span className="absolute bottom-px h-1 w-5 rounded-full bg-[#4cc2ff]" />}
          {state === "open" && <span className="absolute bottom-px h-1 w-2 rounded-full bg-[#9a9a9a]" />}
        </button>
      ))}
    </div>
    <div className="ml-auto mr-6 flex items-center">
      <button aria-label="Hidden icons"><svg width="14" height="8" viewBox="0 0 14 8" {...stroke} strokeWidth="1.600"><path d="M1 7l6-6 6 6" /></svg></button>
      <svg width="20" height="14" viewBox="0 0 20 14" className="ml-[23px]" role="img" aria-label="OneDrive">
        <path d="M4 6a6.500 6.500 0 0 1 12 0l-6 4z" fill="#9b9b9b" /><path d="M4 13.500a4 4 0 0 1-.5-7.900A5 5 0 0 1 9 6.500l8 7z" fill="#d6d6d6" /><path d="M3 13l8-5c1.500-2 4.500-2.200 5.800.2 3 .3 3.500 4.800.2 5.300H4z" fill="#fff" />
      </svg>
      <svg width="18" height="20" viewBox="0 0 18 20" className="ml-[21px]" role="img" aria-label="McAfee">
        <path d="M0 .5l9 4.300 9-4.300v14.800L9 19.500l-9-4.200zM4.200 6.700v6.200L9 15.300l4.800-2.400V6.700L9 9z" fill="#c2292e" fillRule="evenodd" />
      </svg>
      <button className="ml-6 w-[31px] text-center leading-5">ENG<br />IN</button>
      <button aria-label="Network, volume and battery" className="ml-[22px] flex items-center gap-[10px]">
        <svg width="20" height="16" viewBox="0 0 20 16" {...stroke} strokeWidth="1.600"><path d="M1 5.500c5-5.300 13-5.300 18 0M3.800 8.500c3.500-3.600 8.900-3.600 12.400 0M6.500 11.300c2-2 5-2 7 0" /><circle cx="10" cy="13.800" r="1.300" fill="currentColor" /></svg>
        <svg width="20" height="18" viewBox="0 0 20 18" {...stroke} strokeWidth="1.400"><path d="M1 6.500h3.300L8.500 2v14l-4.200-4.500H1zM11.500 6.300c1.200 1.500 1.200 3.900 0 5.400M14 4c2.400 2.800 2.400 7.200 0 10" /><path d="M16.500 1.500c3.600 4 3.600 11 0 15" stroke="#6b6b6b" /></svg>
        <svg width="20" height="14" viewBox="0 0 20 14" {...stroke} strokeWidth="1.400"><rect x=".8" y=".8" width="16" height="12.400" rx="3" /><rect x="3.200" y="3.200" width="9.500" height="7.600" rx="1" fill="currentColor" stroke="none" /><path d="M18.500 5.500v3" strokeWidth="2" /></svg>
      </button>
      <button className="ml-5 w-[78px] text-right leading-5 whitespace-nowrap">17:58<br />02-06-2023</button>
      <span className="ml-2.5 flex size-5 items-center justify-center rounded-full bg-[#4cc2ff] text-xs text-[#111]">3</span>
    </div>
  </footer>
);

export default function App() {
  return (
    <div className="flex h-screen flex-col overflow-hidden bg-[#e6e7eb] font-['Open_Sans',sans-serif] text-black">
      <TabStrip />
      <div className="flex min-h-0 flex-1">
        <div className="flex min-w-0 flex-1 flex-col">
          <Toolbar />
          <FavoritesBar />
          <div className="mb-[9px] ml-2 flex min-h-0 flex-1 overflow-hidden rounded-[10px] bg-white shadow-[0_0_3px_rgba(0,0,0,0.25)]">
            <SitePage />
            <Scrollbar />
          </div>
        </div>
        <Sidebar />
      </div>
      <Taskbar />
    </div>
  );
}
